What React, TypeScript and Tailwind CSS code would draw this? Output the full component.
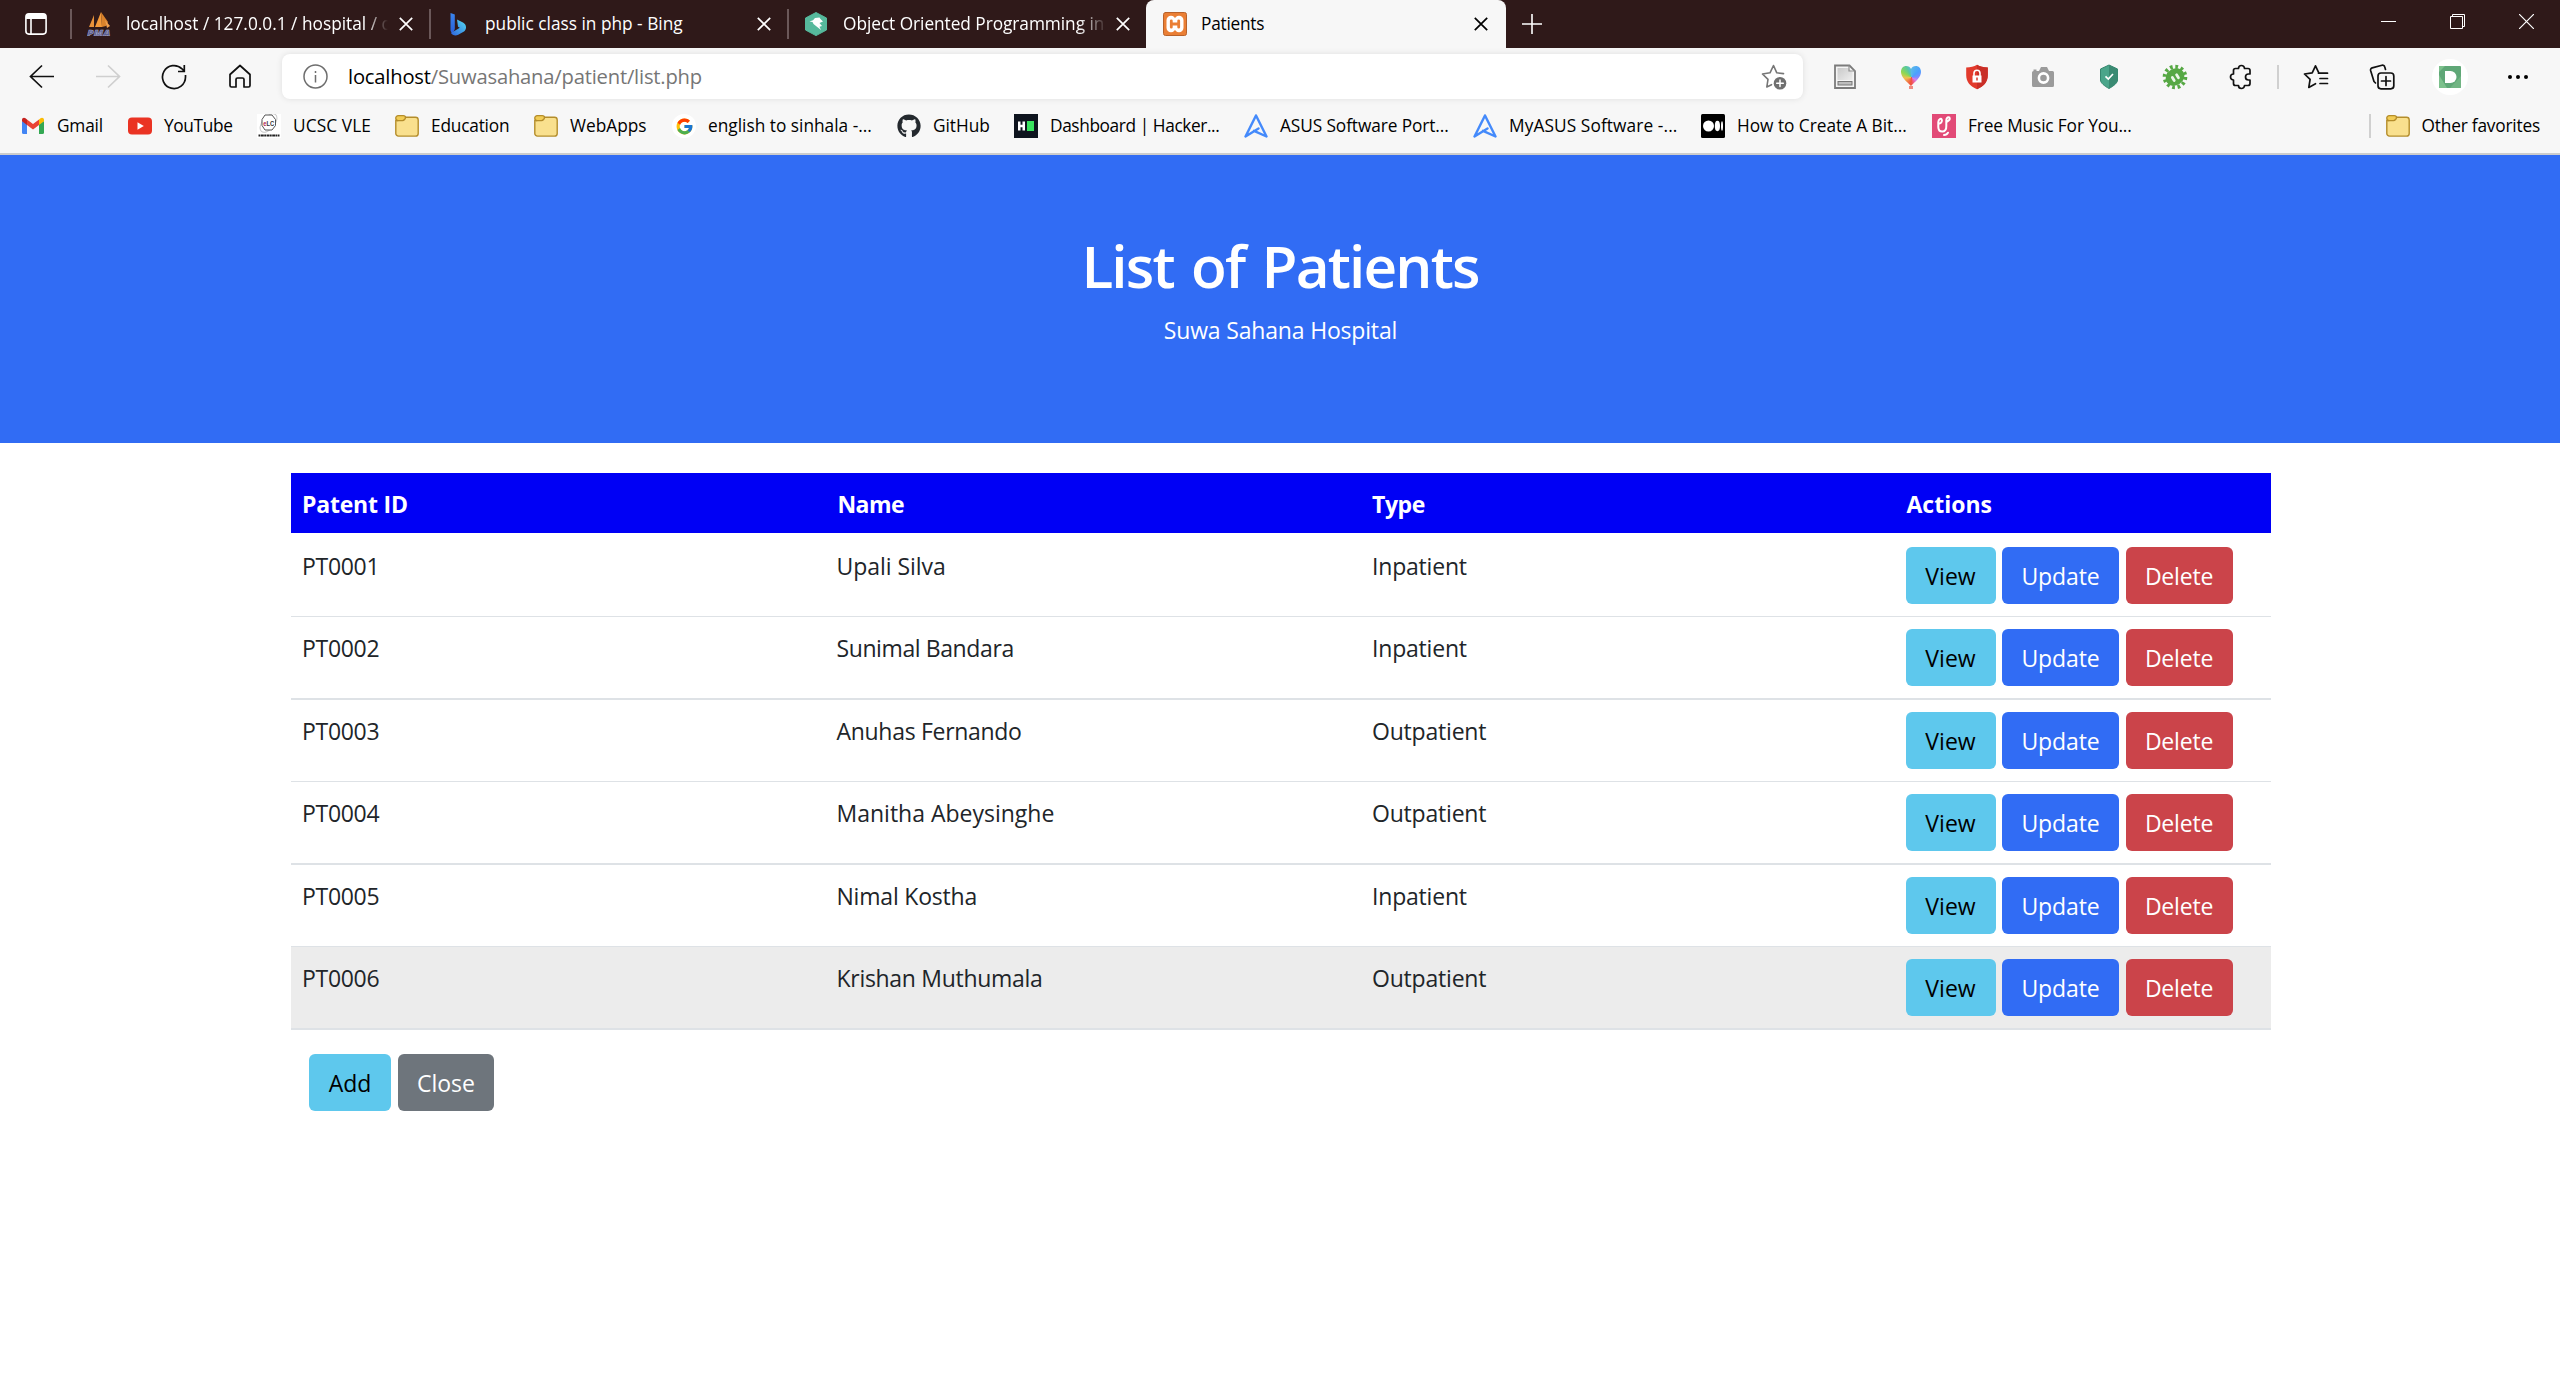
import React from "react";
import { FaGithub } from "react-icons/fa";
import { FcGoogle } from "react-icons/fc";

const X = ({ c = "text-white" }: { c?: string }) => (
  <svg width="14" height="14" viewBox="0 0 14 14" className={`shrink-0 ${c}`} fill="none" stroke="currentColor" strokeWidth="1.700">
    <path d="M0.8 0.8 13.2 13.2M13.2 0.8 0.8 13.2" />
  </svg>
);

const PmaIcon = () => (
  <svg width="24" height="24" viewBox="0 0 24 24" className="shrink-0">
    <path d="M7 3 2 15h5z" fill="#e8923a" />
    <path d="M14 0 8 15h7z" fill="#f39a3a" />
    <path d="M14 0l7 10-2 4-4 1z" fill="#d9822b" />
    <path d="M18 8l5 6-3 2z" fill="#f0a050" />
    <text x="0.300" y="23.500" fontSize="9.500" textLength="23" lengthAdjust="spacingAndGlyphs" fontWeight="800" fontStyle="italic" fontFamily="Open Sans, sans-serif" fill="#5a5f94" stroke="#b9bbd6" strokeWidth="0.400">PMA</text>
  </svg>
);
const BingIcon = () => (
  <svg width="24" height="24" viewBox="0 0 24 24" className="shrink-0">
    <defs>
      <linearGradient id="bg1" x1="0" y1="0" x2="0" y2="1"><stop offset="0" stopColor="#3a86f0" /><stop offset="1" stopColor="#2a5fd8" /></linearGradient>
      <linearGradient id="bg2" x1="0" y1="1" x2="1" y2="0"><stop offset="0" stopColor="#2e63dd" /><stop offset="1" stopColor="#55dcf2" /></linearGradient>
    </defs>
    <path d="M4.500 1 8.800 2.600V17l-2 4.500c-1.400-.6-2.300-2-2.300-3.500z" fill="url(#bg1)" />
    <path d="M11 7.600 17 10.600c2 1.100 3.200 3.100 3 5.200-.1 1.400-.8 2.800-2 3.700l-5.800 3.300c-3 1.400-6 .3-7.200-1.700l8.800-5.400-1.800-.9z" fill="url(#bg2)" />
  </svg>
);
const HexIcon = () => (
  <svg width="24" height="24" viewBox="0 0 24 24" className="shrink-0">
    <path d="M12 0.500 22.500 6v12L12 23.600 1.500 18V6z" fill="#56b99c" stroke="#56b99c" strokeLinejoin="round" />
    <path d="M5.500 9.500 9 8.300 11 6l4.500-.5 1 1.500 2.500 2.500-3.500 1.500 2.500 3-2.500.7 1.500 3.300L9.500 12l-1-2z" fill="#fff" />
  </svg>
);
const XamppIcon = () => (
  <svg width="24" height="24" viewBox="0 0 24 24" className="shrink-0" fill="none" strokeLinecap="round">
    <rect x="0.500" y="0.500" width="23" height="23" rx="2" fill="#ea7f35" stroke="#b9622a" />
    <path d="M8 8.300v7.400M16 8.300v7.400" stroke="#fff" strokeWidth="9" />
    <path d="M8.500 12h7" stroke="#fff" strokeWidth="7" />
    <path d="M8.300 8.800v6.400M15.700 8.800v6.400M8.300 12h7.400" stroke="#ea7f35" strokeWidth="2.800" />
  </svg>
);

const Tab = ({ icon, title, w, fade = "", track }: { icon: React.ReactNode; title: string; w: string; fade?: string; track: string }) => (
  <div className={`flex h-12 shrink-0 items-center pl-[15px] pr-4 text-white ${w}`}>
    {icon}
    <span className={`ml-[15px] mr-[11px] flex-1 overflow-hidden whitespace-nowrap text-[17.300px] ${track} ${fade}`}>{title}</span>
    <X />
  </div>
);
const Sep = () => <div className="h-[30px] w-[2px] shrink-0 bg-[#6b5859]" />;

const Folder = () => (
  <svg width="24" height="24" viewBox="0 0 24 24" className="shrink-0" stroke="#b48d2b" strokeWidth="1.400">
    <path d="M.8 6.500h2L10 3.300h10.500A2.700 2.700 0 0 1 23.200 6v13.400a2.700 2.700 0 0 1-2.700 2.700h-17A2.700 2.700 0 0 1 .8 19.400z" fill="#f9e08e" />
    <path d="M3.300 1.600h4.900c1 0 2.300.8 2.300 2s-1.500 3-3 3H3.300A2.400 2.400 0 0 1 .8 4.200a2.500 2.500 0 0 1 2.500-2.600z" fill="#f2cd55" />
  </svg>
);
const Gmail = () => (
  <svg width="24" height="24" viewBox="0 0 24 24" className="shrink-0">
    <path d="M1 7v11.500A1.500 1.500 0 0 0 2.500 20H6V10z" fill="#4285f4" />
    <path d="M18 10v10h3.500a1.500 1.500 0 0 0 1.500-1.500V7z" fill="#34a853" />
    <path d="M18 5.500V11l5-3.800V6c0-2.200-2-3-3.500-1.800z" fill="#fbbc04" />
    <path d="M6 11V5.400l6 4.600 6-4.600V11l-6 4.600z" fill="#ea4335" />
    <path d="M1 6v1.300L6 11V5.400L4.500 4.200C3 3 1 3.800 1 6z" fill="#c5221f" />
  </svg>
);
const YouTube = () => (
  <svg width="24" height="24" viewBox="0 0 24 24" className="shrink-0">
    <rect y="3.500" width="24" height="17" rx="4" fill="#ea3323" />
    <path d="M9.500 8.300v7.400L15.800 12z" fill="#fff" />
  </svg>
);
const Ucsc = () => (
  <svg width="24" height="24" viewBox="0 0 24 24" className="shrink-0">
    <rect width="24" height="24" fill="#fff" />
    <ellipse cx="11.500" cy="9" rx="11" ry="6" transform="rotate(-50 11.500 9)" fill="none" stroke="#c9c9c9" />
    <path d="M8 1h7l3.500 4.500v6L15 16H8l-3-4.500v-6z" fill="#fff" stroke="#555" />
    <text x="6.200" y="12" fontSize="8" textLength="11" lengthAdjust="spacingAndGlyphs" fontWeight="700" fontFamily="Liberation Sans, sans-serif" fill="#333"><tspan fill="#b02050">e</tspan>LC</text>
    <path d="M1.500 21.500h21" stroke="#222" strokeWidth="2.200" strokeDasharray="1.800 .5 3 .4" />
  </svg>
);
const Google = () => (
  <span className="grid h-6 w-6 shrink-0 place-items-center rounded-full bg-white"><FcGoogle size={19} /></span>
);
const Hacker = () => (
  <svg width="24" height="24" viewBox="0 0 24 24" className="shrink-0">
    <rect width="24" height="24" fill="#0e141e" />
    <path d="M4 7.500h2.500v3.200h2V7.500H11v9H8.500v-3.200h-2v3.200H4z" fill="#fff" />
    <rect x="13" y="7" width="7" height="10" fill="#39e35f" />
  </svg>
);
const Asus = () => (
  <svg width="24" height="24" viewBox="0 0 24 24" className="shrink-0" fill="none" stroke="#448afb" strokeWidth="2.400" strokeLinejoin="round" strokeLinecap="round">
    <path d="M12 1.500 1.500 22.500 14.500 14.500M12 1.500 22.500 22.500 10 16.800" />
  </svg>
);
const Medium = () => (
  <svg width="24" height="24" viewBox="0 0 24 24" className="shrink-0">
    <rect width="24" height="24" rx="1.500" fill="#000" />
    <circle cx="7.500" cy="12" r="5.500" fill="#fff" /><ellipse cx="16.400" cy="12" rx="2.600" ry="5.200" fill="#fff" /><ellipse cx="21" cy="12" rx="1" ry="4.700" fill="#fff" />
  </svg>
);
const Music = () => (
  <svg width="24" height="24" viewBox="0 0 24 24" className="shrink-0">
    <rect width="24" height="24" fill="#e24a77" />
    <g fill="none" stroke="#fff" strokeWidth="2" strokeLinecap="round">
      <path d="M7.500 9.500C9.500 9 10.300 7 9.700 5.500S6.500 5 6.300 8v5c0 3 1.500 4.500 4 4.500s4.200-2 4-5.500V6.500c0-2.200 1-3.300 2.300-3.200 1.500.1 1.500 2 .3 3l-1.500 1.200" />
      <path d="M12 21c2 0 3.300-.8 4-2.300" />
    </g>
  </svg>
);

const bookmarks: { icon: React.ReactNode; label: string; w: string; t: string }[] = [
  { icon: <Gmail />, label: "Gmail", w: "w-[107px]", t: "tracking-[-0.2px]" },
  { icon: <YouTube />, label: "YouTube", w: "w-[129px]", t: "tracking-[-0.35px]" },
  { icon: <Ucsc />, label: "UCSC VLE", w: "w-[138px]", t: "tracking-[0.1px]" },
  { icon: <Folder />, label: "Education", w: "w-[139px]", t: "tracking-[-0.2px]" },
  { icon: <Folder />, label: "WebApps", w: "w-[138px]", t: "tracking-[0px]" },
  { icon: <Google />, label: "english to sinhala -...", w: "w-[225px]", t: "tracking-[0px]" },
  { icon: <FaGithub size={24} className="shrink-0 text-[#24292e]" />, label: "GitHub", w: "w-[117px]", t: "tracking-[-0.05px]" },
  { icon: <Hacker />, label: "Dashboard | Hacker...", w: "w-[230px]", t: "tracking-[-0.4px]" },
  { icon: <Asus />, label: "ASUS Software Port...", w: "w-[229px]", t: "tracking-[-0.1px]" },
  { icon: <Asus />, label: "MyASUS Software -...", w: "w-[228px]", t: "tracking-[0.1px]" },
  { icon: <Medium />, label: "How to Create A Bit...", w: "w-[231px]", t: "tracking-[-0.03px]" },
  { icon: <Music />, label: "Free Music For You...", w: "w-[220px]", t: "tracking-[-0.14px]" },
];

const AddStar = () => (
  <svg width="28" height="28" viewBox="0 0 28 28" fill="none" stroke="#767676" strokeWidth="1.600" strokeLinejoin="round" strokeLinecap="round">
    <path d="M23.500 10.600 16.800 9.800 13.500 2.500 10 9.800 2.500 11l5.500 5.400L6.800 24l4.700-2.300" />
    <circle cx="20" cy="20.300" r="6.300" fill="#6f6f6f" stroke="none" />
    <path d="M20 17v6.600M16.700 20.300h6.600" stroke="#fff" strokeWidth="1.500" />
  </svg>
);
const Doc = () => (
  <svg width="24" height="26" viewBox="0 0 24 26" fill="none">
    <defs><linearGradient id="dg" x1="0" y1="0" x2="1" y2="1"><stop offset="0" stopColor="#c9c9c9" /><stop offset="1" stopColor="#ededed" /></linearGradient></defs>
    <path d="M2 1.500h14.500L22 7v17H2z" fill="#f4f4f4" stroke="#7b7b7b" strokeWidth="1.800" />
    <path d="M4.500 4H15l4.500 4.500V16h-15z" fill="url(#dg)" />
    <path d="M16 1.500V7h6" stroke="#8f8f8f" strokeWidth="1.200" />
    <rect x="5" y="17.500" width="14" height="3.500" fill="#bdbdbd" stroke="#777" strokeWidth="1" />
  </svg>
);
const Heart = () => (
  <span className="relative grid h-6 w-[22px] place-items-center">
    <span className="h-[22px] w-[21px] bg-[conic-gradient(from_0deg_at_50%_52%,#5ab8e8,#4aa0ff_50deg,#7a8cff_85deg,#d080f0_120deg,#f06090_155deg,#f05038_185deg,#f08048_225deg,#f0c050_265deg,#90d850_300deg,#58c8a0_335deg,#5ab8e8)] [clip-path:path('M10.5_20.500C6_16_0.500_11.500_0.500_6.500C0.500_2.500_3_0.500_5.500_0.500C8_0.500_9.700_1.800_10.500_3.500C11.300_1.800_13_0.500_15.500_0.500C18_0.500_20.500_2.500_20.500_6.500C20.500_11.500_15_16_10.500_20.500Z')]" />
    <span className="absolute bottom-0 left-[9px] h-[3px] w-1 bg-[#f08a80]" />
  </span>
);
const RedShield = () => (
  <svg width="24" height="26" viewBox="0 0 24 26">
    <path d="M12 .8c3 1.800 6.500 2.800 10.800 2.800V11c0 7-4 11.500-10.800 14.200C5.200 22.500 1.200 18 1.200 11V3.600C5.500 3.600 9 2.600 12 .8z" fill="#e23a2c" />
    <path d="M12 .8c3 1.800 6.500 2.800 10.800 2.800V11c0 7-4 11.500-10.800 14.200z" fill="#c92f27" />
    <rect x="7.500" y="11.500" width="9" height="7" fill="#fff" />
    <path d="M9 12V9.200a3 3 0 0 1 6 0V12" fill="none" stroke="#fff" strokeWidth="1.600" />
    <path d="M12 13.500v3" stroke="#d8362b" strokeWidth="1.500" />
  </svg>
);
const Camera = () => (
  <svg width="24" height="22" viewBox="0 0 24 22">
    <path d="M2.500 5V3.500h3V5L8 5l2-4h6l2 4h3.500A1.500 1.500 0 0 1 23 6.500v13a1.500 1.500 0 0 1-1.500 1.500h-19A1.500 1.500 0 0 1 1 19.500v-13A1.500 1.500 0 0 1 2.500 5z" fill="#9b9b9b" />
    <circle cx="12.500" cy="12" r="4.600" fill="#9b9b9b" stroke="#fff" strokeWidth="2.600" />
  </svg>
);
const GreenShield = () => (
  <svg width="20" height="26" viewBox="0 0 20 26">
    <path d="M10 1 18.500 5v11c0 3-4 6-8.500 8.500C5.500 22 1.500 19 1.500 16V5z" fill="#4aa58a" stroke="#35866e" />
    <path d="M10 1 18.500 5v11c0 3-4 6-8.500 8.500z" fill="#3a8a72" />
    <path d="M6.500 12.300 9.300 15 14 10" fill="none" stroke="#fff" strokeWidth="1.700" />
  </svg>
);
const Bug = () => (
  <svg width="26" height="26" viewBox="0 0 26 26">
    <circle cx="13" cy="13" r="10.300" fill="none" stroke="#56a844" strokeWidth="4" strokeDasharray="2.700 2.694" />
    <g transform="rotate(-32 13 13)">
      <ellipse cx="13" cy="13" rx="9.800" ry="8.300" fill="#56a844" />
      <path d="M10.500 12v3.500M15.500 12v3.500" stroke="#eaf6e7" strokeWidth="2.800" strokeLinecap="round" />
    </g>
  </svg>
);
const Puzzle = () => (
  <svg width="24" height="26" viewBox="0 0 24 26" fill="none" stroke="#111" strokeWidth="1.700" strokeLinejoin="round">
    <path d="M9.500 4.500a3 3 0 0 1 6 0H19a2 2 0 0 1 2 2V10h-1.500a3 3 0 0 0 0 6H21v3.500a2 2 0 0 1-2 2h-3.500a3 3 0 0 1-6 0H6.500a2 2 0 0 1-2-2V16a3 3 0 0 1 0-6V6.500a2 2 0 0 1 2-2z" />
  </svg>
);
const FavList = () => (
  <svg width="26" height="26" viewBox="0 0 26 26" fill="none" stroke="#111" strokeWidth="1.700" strokeLinejoin="round" strokeLinecap="round">
    <path d="M17.500 9 15.800 8.800 12.500 1.800 9.200 8.800 1.500 10l5.600 5.400-1.300 8 6.700-3.700M15.500 9.200H24.500M17 14.500h7.500M17 19.500h7.500" />
  </svg>
);
const Collections = () => (
  <svg width="26" height="26" viewBox="0 0 26 26" fill="none" stroke="#111" strokeWidth="1.700" strokeLinejoin="round" strokeLinecap="round">
    <path d="M6.500 19 5 17.500 1.600 6.500a2.200 2.200 0 0 1 1.600-2.700L13 1.200a2.200 2.200 0 0 1 2.700 1.600L16.500 5.500" />
    <rect x="9" y="9" width="15.800" height="15.800" rx="3" />
    <path d="M17 12.500v9M12.500 17h9" />
  </svg>
);
const Avatar = () => (
  <span className="grid h-9 w-9 shrink-0 place-items-center rounded-full bg-white">
    <svg width="22" height="22" viewBox="0 0 22 22">
      <rect width="22" height="22" rx="1" fill="#5fa777" /><path d="M0 6 6 0H1a1 1 0 0 0-1 1zM0 22V9l8 13z" fill="#7cc08c" /><path d="M22 10v11a1 1 0 0 1-1 1H11z" fill="#72b584" />
      <path d="M6 5h5.500a6 6 0 0 1 0 12H6z" fill="#fff" />
    </svg>
  </span>
);

const patients = [
  { id: "PT0001", name: "Upali Silva", type: "Inpatient", t: "tracking-[-0.05px]", row: "h-[84px] border-b pt-[14px]" },
  { id: "PT0002", name: "Sunimal Bandara", type: "Inpatient", t: "tracking-[-0.4px]", row: "h-[83px] border-b-2 pt-3" },
  { id: "PT0003", name: "Anuhas Fernando", type: "Outpatient", t: "tracking-[-0.3px]", row: "h-[82px] border-b pt-3" },
  { id: "PT0004", name: "Manitha Abeysinghe", type: "Outpatient", t: "tracking-[0px]", row: "h-[83px] border-b-2 pt-3" },
  { id: "PT0005", name: "Nimal Kostha", type: "Inpatient", t: "tracking-[-0.2px]", row: "h-[82px] border-b pt-3" },
  { id: "PT0006", name: "Krishan Muthumala", type: "Outpatient", t: "tracking-[-0.3px]", row: "h-[83px] border-b-2 pt-3 bg-[#ececec]" },
];

const Btn = ({ c, children }: { c: string; children: React.ReactNode }) => (
  <button className={`flex h-[57px] items-center justify-center rounded-md pt-[2px] text-[23px] ${c}`}>{children}</button>
);

const COLS = "grid grid-cols-[534.5px_534.5px_534.5px_1fr] pl-3";

export default function App() {
  return (
    <div className="h-[1380px] w-[2560px] overflow-hidden bg-white font-['Open_Sans',sans-serif] text-[#212529]">
      <header className="flex h-12 items-center bg-[#2f1919]">
        <div className="flex w-[70px] shrink-0 pl-[25px]">
          <svg width="22" height="22" viewBox="0 0 22 22" fill="none" stroke="#fff" strokeWidth="1.600">
            <rect x="0.900" y="0.900" width="20.200" height="20.200" rx="3" /><path d="M1 1h20v5H1z" fill="#fff" stroke="none" /><path d="M6 6v15" />
          </svg>
        </div>
        <Sep />
        <Tab icon={<PmaIcon />} title="localhost / 127.0.0.1 / hospital / d" w="w-[357px]" track="" fade="[mask-image:linear-gradient(to_right,black_240px,transparent_262px)]" />
        <Sep />
        <Tab icon={<BingIcon />} title="public class in php - Bing" w="w-[356px]" track="" />
        <Sep />
        <Tab icon={<HexIcon />} title="Object Oriented Programming in" w="w-[357px]" track="tracking-[-0.05px]" fade="[mask-image:linear-gradient(to_right,black_236px,transparent_264px)]" />
        <div className="flex h-12 w-[360px] shrink-0 items-center rounded-t-lg bg-[#f7f7f7] pl-[17px] pr-[18px]">
          <XamppIcon />
          <span className="ml-[14px] flex-1 text-[17.300px] tracking-[-0.25px] text-black">Patients</span>
          <X c="text-black" />
        </div>
        <svg width="20" height="20" viewBox="0 0 20 20" className="ml-4 shrink-0" stroke="#fff" strokeWidth="1.600"><path d="M10 0v20M0 10h20" /></svg>
        <div className="ml-auto mb-[5px] flex items-center pr-[26px] text-white">
          <div className="mr-[54px] h-px w-[15px] bg-white" />
          <svg width="15" height="15" viewBox="0 0 15 15" className="mr-[54px]" fill="none" stroke="#fff"><path d="M.5 2.500h12v12H.5zM2.500 2.500v-2h12v12h-2" /></svg>
          <svg width="15" height="15" viewBox="0 0 15 15" stroke="#fff" strokeWidth="1.200"><path d="M0 0 15 15M15 0 0 15" /></svg>
        </div>
      </header>

      <div className="h-[107px] border-b-2 border-[#cccccc] bg-[#f7f7f7]">
        <div className="flex h-[57px] items-center">
          <div className="flex w-[282px] shrink-0 items-center pl-[29px]">
            <svg width="26" height="26" viewBox="0 0 26 26" fill="none" stroke="#111" strokeWidth="1.700"><path d="M25 12.500H1.500M13 1.500 1.500 12.500 13 23.500" /></svg>
            <svg width="26" height="26" viewBox="0 0 26 26" className="ml-10" fill="none" stroke="#cfcfcf" strokeWidth="1.700"><path d="M1 12.500H24.500M13 1.500 24.500 12.500 13 23.500" /></svg>
            <svg width="26" height="26" viewBox="0 0 26 26" className="ml-10" fill="none" stroke="#111" strokeWidth="1.700"><path d="M24.500 11v2A11.500 11.500 0 1 1 21 4.800L23 7M23.300 1v6.500H17" /></svg>
            <svg width="26" height="26" viewBox="0 0 26 26" className="ml-10" fill="none" stroke="#111" strokeWidth="1.700" strokeLinejoin="round"><path d="M3 10.500 13 1.500l10 9V21.500a1.500 1.500 0 0 1-1.500 1.500H17V15.500a1.500 1.500 0 0 0-1.500-1.500h-5A1.500 1.500 0 0 0 9 15.500V23H4.500A1.500 1.500 0 0 1 3 21.500z" /></svg>
          </div>
          <div className="flex h-[45px] w-[1521px] shrink-0 items-center rounded-lg bg-white pl-[21px] pr-[15px] shadow-[0_0_6px_rgba(0,0,0,0.1)]">
            <svg width="25" height="25" viewBox="0 0 25 25" fill="none" stroke="#6e6e6e" strokeWidth="1.500"><circle cx="12.500" cy="12.500" r="11.500" /><path d="M12.500 11v7.500M12.500 7v2" /></svg>
            <span className="ml-5 flex-1 text-[20.200px] tracking-[-0.2px] text-[#767676]"><span className="text-black">localhost</span>/Suwasahana/patient/list.php</span>
            <AddStar />
          </div>
          <div className="flex shrink-0 items-center pl-[30px]">
            <Doc />
            <div className="ml-[43px]"><Heart /></div>
            <div className="ml-[43px]"><RedShield /></div>
            <div className="ml-[42px]"><Camera /></div>
            <div className="ml-[44px]"><GreenShield /></div>
            <div className="ml-[43px]"><Bug /></div>
            <div className="ml-[41px]"><Puzzle /></div>
            <div className="ml-[24px] h-6 w-[2px] bg-[#d0d0d0]" />
            <div className="ml-6"><FavList /></div>
            <div className="ml-10"><Collections /></div>
            <div className="ml-[37px]"><Avatar /></div>
            <svg width="22" height="6" viewBox="0 0 22 6" className="ml-[39px]"><circle cx="3" cy="3" r="2" /><circle cx="11" cy="3" r="2" /><circle cx="19" cy="3" r="2" /></svg>
          </div>
        </div>
        <div className="flex h-[42px] items-center pl-[21px] text-[17.300px] text-black">
          {bookmarks.map((b) => (
            <div key={b.label} className={`flex shrink-0 items-center gap-3 whitespace-nowrap ${b.w}`}>
              {b.icon}
              <span className={b.t}>{b.label}</span>
            </div>
          ))}
          <div className="ml-auto flex items-center pr-[20px]">
            <div className="h-6 w-[2px] bg-[#d0d0d0]" />
            <div className="ml-[15px]"><Folder /></div>
            <span className="ml-3 tracking-[-0.2px]">Other favorites</span>
          </div>
        </div>
      </div>

      <section className="flex h-[288px] flex-col items-center bg-[#316cf4] pt-[70px] text-white">
        <h1 className="text-[58.500px] font-semibold leading-[80px] tracking-[-1.850px] [word-spacing:4px]">List of Patients</h1>
        <p className="pl-px text-[23px] leading-[50px] tracking-[-0.18px]">Suwa Sahana Hospital</p>
      </section>

      <main className="mx-auto mt-[30px] w-[1980px] text-[23px]">
        <div className="-mr-px ml-px">
          <div className={`${COLS} h-[60px] items-center bg-[#0000f5] pt-[3px] font-bold text-white`}>
            <div className="-ml-px tracking-[-0.2px]">Patent ID</div>
            <div className="tracking-[-0.6px]">Name</div>
            <div className="tracking-[-0.4px]">Type</div>
            <div>Actions</div>
          </div>
          {patients.map((p) => (
            <div key={p.id} className={`${COLS} border-[#dee2e6] leading-[39px] ${p.row}`}>
              <div className="-ml-px tracking-[-0.3px]">{p.id}</div>
              <div className={`-ml-px ${p.t}`}>{p.name}</div>
              <div className="tracking-[-0.2px]">{p.type}</div>
              <div className="-ml-px flex gap-[6.500px]">
                <Btn c="w-[90px] bg-[#5ec8ed] text-black">View</Btn>
                <Btn c="w-[117px] bg-[#316cf4] text-white tracking-[-0.1px]">Update</Btn>
                <Btn c="w-[107px] bg-[#cb444a] text-white tracking-[-0.2px]">Delete</Btn>
              </div>
            </div>
          ))}
        </div>
        <div className="mt-6 flex gap-[7px] pl-[19px]">
          <Btn c="w-[82px] bg-[#5ec8ed] text-black">Add</Btn>
          <Btn c="w-[96px] bg-[#6e757c] text-white">Close</Btn>
        </div>
      </main>
    </div>
  );
}
